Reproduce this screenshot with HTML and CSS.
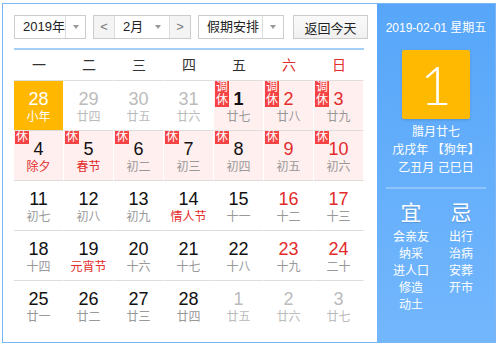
FILE: index.html
```html
<!DOCTYPE html>
<html lang="zh-CN">
<head>
    <meta charset="UTF-8">
    <meta name="viewport" content="width=device-width, initial-scale=1.0">
    <title>万年历</title>
    <link rel="stylesheet" href="styles.css">
</head>
<body>

    <div class="calendar">
        <div class="main">
            <div class="toolbar">
                <div class="select year">
                    <span class="label">2019年</span>
                    <span class="arrow"><i></i></span>
                </div>
                <div class="month-picker">
                    <span class="step">&lt;</span>
                    <div class="select month">
                        <span class="label">2月</span>
                        <span class="arrow"><i></i></span>
                    </div>
                    <span class="step">&gt;</span>
                </div>
                <div class="select holiday">
                    <span class="label">假期安排</span>
                    <span class="arrow"><i></i></span>
                </div>
                <button class="today-btn">返回今天</button>
            </div>

            <div class="week">
                <span>一</span><span>二</span><span>三</span><span>四</span><span>五</span>
                <span class="red">六</span><span class="red">日</span>
            </div>

            <div class="days">
                <div class="day today"><span class="num">28</span><span class="lunar">小年</span></div>
                <div class="day other"><span class="num">29</span><span class="lunar">廿四</span></div>
                <div class="day other"><span class="num">30</span><span class="lunar">廿五</span></div>
                <div class="day other"><span class="num">31</span><span class="lunar">廿六</span></div>
                <div class="day rest"><span class="tag">调<br>休</span><span class="num bold">1</span><span class="lunar">廿七</span></div>
                <div class="day rest weekend"><span class="tag">调<br>休</span><span class="num">2</span><span class="lunar">廿八</span></div>
                <div class="day rest weekend"><span class="tag">调<br>休</span><span class="num">3</span><span class="lunar">廿九</span></div>

                <div class="day rest fest"><span class="tag">休</span><span class="num">4</span><span class="lunar">除夕</span></div>
                <div class="day rest fest"><span class="tag">休</span><span class="num">5</span><span class="lunar">春节</span></div>
                <div class="day rest"><span class="tag">休</span><span class="num">6</span><span class="lunar">初二</span></div>
                <div class="day rest"><span class="tag">休</span><span class="num">7</span><span class="lunar">初三</span></div>
                <div class="day rest"><span class="tag">休</span><span class="num">8</span><span class="lunar">初四</span></div>
                <div class="day rest weekend"><span class="tag">休</span><span class="num">9</span><span class="lunar">初五</span></div>
                <div class="day rest weekend"><span class="tag">休</span><span class="num">10</span><span class="lunar">初六</span></div>

                <div class="day"><span class="num">11</span><span class="lunar">初七</span></div>
                <div class="day"><span class="num">12</span><span class="lunar">初八</span></div>
                <div class="day"><span class="num">13</span><span class="lunar">初九</span></div>
                <div class="day fest"><span class="num">14</span><span class="lunar">情人节</span></div>
                <div class="day"><span class="num">15</span><span class="lunar">十一</span></div>
                <div class="day weekend"><span class="num">16</span><span class="lunar">十二</span></div>
                <div class="day weekend"><span class="num">17</span><span class="lunar">十三</span></div>

                <div class="day"><span class="num">18</span><span class="lunar">十四</span></div>
                <div class="day fest"><span class="num">19</span><span class="lunar">元宵节</span></div>
                <div class="day"><span class="num">20</span><span class="lunar">十六</span></div>
                <div class="day"><span class="num">21</span><span class="lunar">十七</span></div>
                <div class="day"><span class="num">22</span><span class="lunar">十八</span></div>
                <div class="day weekend"><span class="num">23</span><span class="lunar">十九</span></div>
                <div class="day weekend"><span class="num">24</span><span class="lunar">二十</span></div>

                <div class="day"><span class="num">25</span><span class="lunar">廿一</span></div>
                <div class="day"><span class="num">26</span><span class="lunar">廿二</span></div>
                <div class="day"><span class="num">27</span><span class="lunar">廿三</span></div>
                <div class="day"><span class="num">28</span><span class="lunar">廿四</span></div>
                <div class="day other"><span class="num">1</span><span class="lunar">廿五</span></div>
                <div class="day other"><span class="num">2</span><span class="lunar">廿六</span></div>
                <div class="day other"><span class="num">3</span><span class="lunar">廿七</span></div>
            </div>
        </div>

        <div class="side">
            <div class="side-date">2019-02-01 星期五</div>
            <div class="side-day">1</div>
            <div class="side-lunar">
                <p>腊月廿七</p>
                <p>戊戌年 【狗年】</p>
                <p>乙丑月 己巳日</p>
            </div>
            <div class="side-line"></div>
            <div class="yiji">
                <ul>
                    <li class="head">宜</li>
                    <li>会亲友</li>
                    <li>纳采</li>
                    <li>进人口</li>
                    <li>修造</li>
                    <li>动土</li>
                </ul>
                <ul>
                    <li class="head">忌</li>
                    <li>出行</li>
                    <li>治病</li>
                    <li>安葬</li>
                    <li>开市</li>
                </ul>
            </div>
        </div>
    </div>

</body>
</html>
```

FILE: styles.css
```css
body {
    margin: 0;
    font-family: "Liberation Sans", "Noto Sans CJK SC", sans-serif;
    color: #222;
}

.calendar {
    display: flex;
    width: 492px;
    height: 338px;
    margin: 3px 0 0 2px;
    border: 1px solid #7ab6f6;
}

.main {
    width: 363px;
    padding: 11px 0 0 11px;
    background: #fff;
}

/* toolbar */
.toolbar {
    display: flex;
    height: 24px;
    font-size: 13px;
}

.select {
    display: flex;
    height: 22px;
    border: 1px solid #ccc;
    background: #fff;
}

.select .label {
    flex: 1;
    line-height: 22px;
    padding-left: 8px;
    white-space: nowrap;
}

.select .arrow {
    display: flex;
    align-items: center;
    justify-content: center;
    flex: none;
    width: 21px;
    border-left: 1px solid #ddd;
}

.arrow i {
    width: 0;
    height: 0;
    border-top: 4px solid #999;
    border-left: 3px solid transparent;
    border-right: 3px solid transparent;
}

.year {
    width: 70px;
}

.month-picker {
    display: flex;
    height: 22px;
    margin-left: 7px;
    border: 1px solid #ccc;
}

.month-picker .step {
    width: 20px;
    line-height: 22px;
    text-align: center;
    color: #777;
    background: #f4f4f4;
}

.month-picker .month {
    width: 54px;
    height: 22px;
    border: none;
    border-left: 1px solid #ddd;
    border-right: 1px solid #ddd;
}

.month-picker .month .arrow {
    border-left: none;
    width: 22px;
}

.holiday {
    width: 84px;
    margin-left: 7px;
}

.holiday .arrow {
    width: 20px;
}

.today-btn {
    width: 75px;
    height: 24px;
    margin-left: 9px;
    padding: 0;
    font: inherit;
    color: #222;
    border: 1px solid #ccc;
    background: linear-gradient(#fafafa, #f0f0f0);
}

/* week header */
.week {
    display: flex;
    width: 350px;
    margin-top: 9px;
    border-top: 2px solid #a3cff8;
    height: 30px;
    line-height: 30px;
    font-size: 14px;
    color: #333;
}

.week span {
    width: 50px;
    text-align: center;
}

.week .red {
    color: #e32b2b;
}

/* days */
.days {
    display: grid;
    grid-template-columns: repeat(7, 50px);
    width: 350px;
}

.day {
    position: relative;
    height: 41px;
    padding-top: 8px;
    border-top: 1px solid #ddd;
    border-right: 1px solid #fff;
    display: flex;
    flex-direction: column;
    align-items: center;
}

.day .num {
    font-size: 18px;
    line-height: 20px;
    color: #111;
}

.day .num.bold {
    font-weight: bold;
}

.day .lunar {
    font-size: 12px;
    line-height: 16px;
    color: #999;
}

.rest {
    background: #ffefef;
}

.weekend .num,
.fest .lunar {
    color: #e32b2b;
}

.other .num,
.other .lunar {
    color: #bbb;
}

.today {
    background: #ffb700;
}

.today .num,
.today .lunar {
    color: #fff;
}

.tag {
    position: absolute;
    top: 0;
    left: 1px;
    width: 14px;
    font-size: 12px;
    line-height: 13px;
    text-align: center;
    color: #fff;
    background: #f54343;
}

/* side panel */
.side {
    flex: 1;
    display: flex;
    flex-direction: column;
    align-items: center;
    color: #fff;
    background: linear-gradient(#57a6f9, #73b7fd);
}

.side-date {
    margin-top: 15px;
    font-size: 12px;
    line-height: 18px;
}

.side-day {
    display: flex;
    align-items: center;
    justify-content: center;
    width: 68px;
    height: 69px;
    margin-top: 13px;
    border-radius: 2px;
    background: #ffb900;
    box-shadow: 0 1px 3px rgba(0, 0, 0, 0.15);
    font-family: "Lato", "Liberation Sans", sans-serif;
    font-weight: 300;
    font-size: 54px;
}

.side-lunar {
    margin-top: 4px;
    font-size: 12px;
    line-height: 18px;
    text-align: center;
}

.side-lunar p {
    margin: 0;
}

.side-line {
    width: 100px;
    height: 2px;
    margin-top: 10px;
    background: #8fc3fb;
}

.yiji {
    display: flex;
    width: 100px;
    margin-top: 11px;
}

.yiji ul {
    flex: 1;
    list-style: none;
    margin: 0;
    padding: 0;
    text-align: center;
    font-size: 12px;
    line-height: 17px;
}

.yiji .head {
    font-size: 21px;
    line-height: 26px;
    margin-bottom: 3px;
    text-shadow: 0 1px 1px rgba(0, 0, 0, 0.15);
}
```
